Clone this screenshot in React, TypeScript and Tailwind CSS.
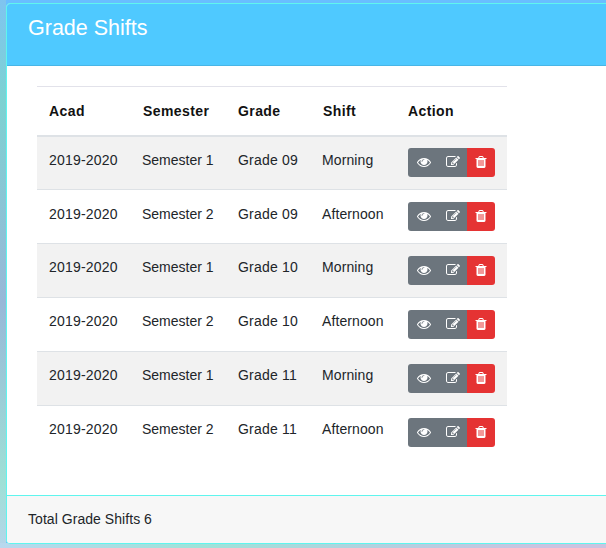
import React from "react";

const rows = [
  { acad: "2019-2020", semester: "Semester 1", grade: "Grade 09", shift: "Morning" },
  { acad: "2019-2020", semester: "Semester 2", grade: "Grade 09", shift: "Afternoon" },
  { acad: "2019-2020", semester: "Semester 1", grade: "Grade 10", shift: "Morning" },
  { acad: "2019-2020", semester: "Semester 2", grade: "Grade 10", shift: "Afternoon" },
  { acad: "2019-2020", semester: "Semester 1", grade: "Grade 11", shift: "Morning" },
  { acad: "2019-2020", semester: "Semester 2", grade: "Grade 11", shift: "Afternoon" },
];

const EyeIcon = () => (
  <svg viewBox="0 0 1792 1792" className="h-[14px] w-[14px] fill-current">
    <path d="M1664 960q-152-236-381-353 61 104 61 225 0 185-131.5 316.5t-316.5 131.5-316.5-131.5-131.5-316.5q0-121 61-225-229 117-381 353 133 205 333.5 326.5t434.5 121.5 434.5-121.5 333.5-326.5zm-720-384q0-20-14-34t-34-14q-125 0-214.5 89.5t-89.5 214.5q0 20 14 34t34 14 34-14 14-34q0-86 61-147t147-61q20 0 34-14t14-34zm848 384q0 34-20 69-140 230-376.5 368.5t-499.5 138.5-499.5-139-376.5-368q-20-35-20-69t20-69q140-229 376.5-368t499.5-139 499.5 139 376.5 368q20 35 20 69z" />
  </svg>
);

const EditIcon = () => (
  <svg viewBox="0 0 1792 1792" className="h-[14px] w-[14px] fill-current">
    <path d="M888 1184l116-116-152-152-116 116v56h96v96h56zm440-720q-16-16-33 1l-350 350q-17 17-1 33t33-1l350-350q17-17 1-33zm80 594v190q0 119-84.5 203.5t-203.5 84.5h-832q-119 0-203.5-84.5t-84.5-203.5v-832q0-119 84.5-203.5t203.5-84.5h832q63 0 117 25 15 7 18 23 3 17-9 29l-49 49q-14 14-32 8-23-6-45-6h-832q-66 0-113 47t-47 113v832q0 66 47 113t113 47h832q66 0 113-47t47-113v-126q0-13 9-22l64-64q15-15 35-9t20 29zm-96-738l288 288-672 672h-288v-288zm444 132l-92 92-288-288 92-92q28-28 68-28t68 28l152 152q28 28 28 68t-28 68z" />
  </svg>
);

const TrashIcon = () => (
  <svg viewBox="0 0 1792 1792" className="h-[14px] w-[14px] fill-current">
    <path d="M704 1376v-704q0-14-9-23t-23-9h-64q-14 0-23 9t-9 23v704q0 14 9 23t23 9h64q14 0 23-9t9-23zm256 0v-704q0-14-9-23t-23-9h-64q-14 0-23 9t-9 23v704q0 14 9 23t23 9h64q14 0 23-9t9-23zm256 0v-704q0-14-9-23t-23-9h-64q-14 0-23 9t-9 23v704q0 14 9 23t23 9h64q14 0 23-9t9-23zm-544-992h448l-48-117q-7-9-17-11h-317q-10 2-17 11zm928 32v64q0 14-9 23t-23 9h-96v948q0 83-47 143.5t-113 60.5h-832q-66 0-113-58.5t-47-141.5v-952h-96q-14 0-23-9t-9-23v-64q0-14 9-23t23-9h309l70-167q15-37 54-63t79-26h320q40 0 79 26t54 63l70 167h309q14 0 23 9t9 23z" />
  </svg>
);

const ActionButtons = () => (
  <div className="flex h-[29px] w-[87px] overflow-hidden rounded-[3px] text-white">
    <button className="flex w-[31px] items-center justify-center bg-[#6c757d] pb-[2px]">
      <EyeIcon />
    </button>
    <button className="flex w-[28px] items-center justify-center bg-[#6c757d] pb-[2px]">
      <EditIcon />
    </button>
    <button className="flex w-[28px] items-center justify-center bg-[#e53333] pb-[2px]">
      <TrashIcon />
    </button>
  </div>
);

export default function App() {
  return (
    <div className="h-[548px] w-[606px] overflow-hidden pl-[6px] pt-[3px] font-['Liberation_Sans',sans-serif] text-[14px] text-[#212529] [background:linear-gradient(to_right,#b8d8ee,#9fe3d9_33%,#b5cfe0_66%,#cbc3e0_90%)_bottom/100%_5px_no-repeat,linear-gradient(to_bottom,#7fc4f0,#7dd2d2_18%,#98b8d8_55%,#9fe0d6_88%,#b5d5ea)_left/6px_100%_no-repeat,#69beff]">
      <div className="flex h-[541px] w-[620px] flex-col overflow-hidden rounded-[4px] border border-[#5ff5ee] bg-white">
        <div className="h-[62px] border-b border-[#48b5e6] bg-[#4fc9ff] pl-[21px] pt-[12px] text-[21.5px] leading-[25px] text-white">
          Grade Shifts
        </div>
        <div className="flex-1 pl-[30px] pt-[20px]">
          <table className="w-[470px] table-fixed border-collapse">
            <thead>
              <tr className="h-[49px] border-t border-b-2 border-t-[#e2e2ea] border-b-[#dee2e6] text-left text-[#111]">
                <th className="w-[93px] pl-[12px] pt-[2px] font-bold tracking-[0.4px]">Acad</th>
                <th className="w-[96px] pl-[13px] pt-[2px] font-bold tracking-[0.4px]">Semester</th>
                <th className="w-[84px] pl-[12px] pt-[2px] font-bold tracking-[0.4px]">Grade</th>
                <th className="w-[86px] pl-[13px] pt-[2px] font-bold tracking-[0.4px]">Shift</th>
                <th className="pl-[12px] pt-[2px] font-bold tracking-[0.4px]">Action</th>
              </tr>
            </thead>
            <tbody>
              {rows.map((row, i) => {
                const textPad = i < 2 ? "pb-[5px]" : "pb-[7px]";
                return (
                  <tr key={i} className={`h-[54px] border-b border-[#dee2e6] last:border-b-0 ${i % 2 === 0 ? "bg-[#f2f2f2]" : "bg-white"}`}>
                    <td className={`pl-[12px] tracking-[0.2px] ${textPad}`}>{row.acad}</td>
                    <td className={`pl-[12px] ${textPad}`}>{row.semester}</td>
                    <td className={`pl-[12px] tracking-[0.2px] ${textPad}`}>{row.grade}</td>
                    <td className={`pl-[12px] tracking-[0.1px] ${textPad}`}>{row.shift}</td>
                    <td className="pl-[12px]">
                      <ActionButtons />
                    </td>
                  </tr>
                );
              })}
            </tbody>
          </table>
        </div>
        <div className="flex h-[48px] items-center border-t border-[#5ff5ee] bg-[#f7f7f7] pl-[21px] tracking-[0.05px]">
          Total Grade Shifts 6
        </div>
      </div>
    </div>
  );
}
